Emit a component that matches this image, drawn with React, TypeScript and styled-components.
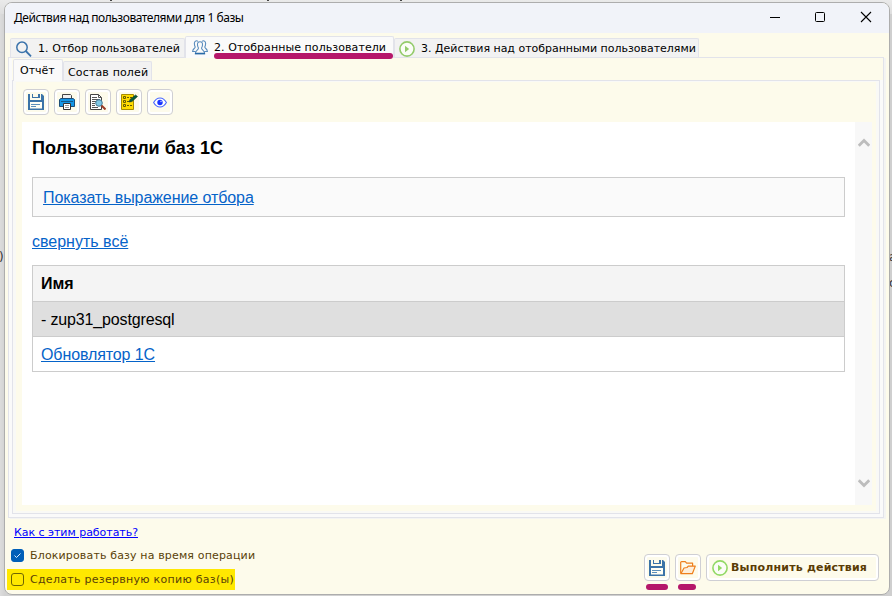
import React from "react";
import styled, { createGlobalStyle } from "styled-components";

const GlobalStyle = createGlobalStyle`
  * { box-sizing: border-box; }
  html, body { margin: 0; padding: 0; overflow: hidden; }
`;

const ui = `"DejaVu Sans", Verdana, sans-serif`;
const LINE = "#e2e3ea";
const CREAM = "#fdfbeb";

const Desktop = styled.div`
  position: relative;
  width: 892px;
  height: 596px;
  padding: 2px 2px 1px 4px;
  overflow: hidden;
  background: linear-gradient(90deg, #dcdcdc 0, #d2d2d2 5px, #d0d0d0 50%, #cfcfcf 100%);
  &::before {
    content: "";
    position: absolute;
    inset: 0 0 auto 0;
    height: 14px;
    background: linear-gradient(#eaeaea, #dedede);
  }
`;

const Stray = styled.span<{ $x: number; $y: number }>`
  position: absolute;
  left: ${(p) => p.$x}px;
  top: ${(p) => p.$y}px;
  font: 12px/14px ${ui};
  color: #333;
`;

const Tick = styled.i<{ $x: number }>`
  position: absolute;
  left: ${(p) => p.$x}px;
  top: 0;
  width: 2px;
  height: 1px;
  background: #444;
`;

const Window = styled.main`
  position: relative;
  display: flex;
  flex-direction: column;
  width: 886px;
  height: 593px;
  border: 1px solid #adadad;
  border-radius: 8px;
  overflow: hidden;
  background: ${CREAM};
`;

const TitleBar = styled.header`
  display: flex;
  align-items: center;
  justify-content: space-between;
  flex: none;
  height: 30px;
  padding-left: 9px;
  background: #f1f3f9;
`;

const Title = styled.h1`
  margin: 0;
  font: 400 12px/16px "Noto Sans", "Open Sans", sans-serif;
  letter-spacing: -0.45px;
  color: #000;
`;

const Controls = styled.div`
  display: flex;
  svg { display: block; }
`;

const TabStrip = styled.nav<{ $inner?: boolean }>`
  display: flex;
  align-items: flex-end;
  flex: none;
  height: ${(p) => (p.$inner ? 22 : 24)}px;
  padding-left: ${(p) => (p.$inner ? 4 : 5)}px;
  background: ${(p) => (p.$inner ? `linear-gradient(90deg, #fafafa 3px, ${CREAM} 3px)` : CREAM)};
`;

const Tab = styled.div<{ $w: number; $active?: boolean; $spacing?: number; $gap?: number }>`
  position: relative;
  z-index: ${(p) => (p.$active ? 1 : 0)};
  display: flex;
  align-items: center;
  flex: none;
  width: ${(p) => p.$w}px;
  height: ${(p) => (p.$active ? 22 : 19)}px;
  margin-bottom: ${(p) => (p.$active ? -1 : 0)}px;
  padding: ${(p) => (p.$active ? "0 0 0 6px" : "2px 0 0 4px")};
  gap: ${(p) => p.$gap ?? 5}px;
  border: 1px solid ${LINE};
  border-bottom: 0;
  border-radius: 2px 2px 0 0;
  background: ${(p) => (p.$active ? "#fafafa" : "#f2f2f2")};
  font: 11px/14px ${ui};
  letter-spacing: ${(p) => p.$spacing ?? 0}px;
  white-space: nowrap;
  color: #000;
  svg { flex: none; margin-top: -1px; }
`;

const TabLabel = styled.span<{ $drop?: boolean }>`
  padding-top: ${(p) => (p.$drop ? 2 : 0)}px;
`;

const OuterPanel = styled.section`
  display: flex;
  flex-direction: column;
  flex: none;
  width: 876px;
  height: 461px;
  margin-left: 3px;
  border: 1px solid ${LINE};
  background: #fafafa;
  box-shadow: 2px 1px 0 #f4f4f2;
`;

const InnerPanel = styled.section`
  width: 868px;
  height: 434px;
  margin-left: 3px;
  padding: 1px 3px 2px;
  border: 1px solid ${LINE};
  background: #f9f9f6;
`;

const ReportPane = styled.div`
  height: 429px;
  padding: 7px 4px 6px 6px;
  background: ${CREAM};
`;

const ToolBar = styled.div`
  display: flex;
  gap: 5px;
  height: 33px;
  padding-left: 1px;
`;

const Button = styled.button<{ $w?: number; $h?: number }>`
  display: flex;
  align-items: center;
  justify-content: ${(p) => (p.$w ? "flex-start" : "center")};
  flex: none;
  gap: 3px;
  width: ${(p) => p.$w ?? 26}px;
  height: ${(p) => p.$h ?? 26}px;
  padding: 0 0 0 ${(p) => (p.$w ? 5 : 0)}px;
  border: 1px solid #cfcfd4;
  border-radius: 4px;
  background: ${CREAM};
  box-shadow: inset 0 0 0 2px #fff;
  font: 700 11px/14px ${ui};
  letter-spacing: 0.19px;
  white-space: nowrap;
  color: #5a3c05;
  svg { flex: none; }
`;

const ButtonLabel = styled.span`
  padding-top: 1px;
`;

const Viewer = styled.div`
  display: flex;
  height: 383px;
`;

const Report = styled.article`
  flex: none;
  width: 833px;
  padding: 0 10px;
  background: #fff;
  font: 16px/20px "Liberation Sans", Arial, sans-serif;
  color: #000;
`;

const ReportTitle = styled.h2`
  margin: 0;
  padding-top: 15px;
  height: 55px;
  font-size: 18px;
  line-height: 22px;
`;

const Link = styled.a<{ $spacing?: number }>`
  color: #0563c9;
  text-decoration: underline;
  letter-spacing: ${(p) => p.$spacing ?? 0}px;
`;

const FilterBox = styled.div`
  display: flex;
  align-items: center;
  height: 40px;
  padding: 1px 10px 0;
  border: 1px solid #ccc;
  background: #fafafa;
`;

const Collapse = styled.div`
  height: 48px;
  padding-top: 15px;
`;

const Table = styled.div`
  border: 1px solid #ccc;
  border-top: 0;
`;

const Row = styled.div<{ $h: number; $bg: string; $bold?: boolean; $spacing?: number }>`
  display: flex;
  align-items: center;
  height: ${(p) => p.$h}px;
  padding: ${(p) => (p.$bold ? 0 : 1)}px 0 0 8px;
  border-top: 1px solid #ccc;
  background: ${(p) => p.$bg};
  font-weight: ${(p) => (p.$bold ? 700 : 400)};
  letter-spacing: ${(p) => p.$spacing ?? 0}px;
`;

const ScrollBar = styled.div`
  display: flex;
  flex-direction: column;
  justify-content: space-between;
  align-items: center;
  flex: none;
  width: 17px;
  padding: 16px 0 17px;
  background: #f8f8f8;
  svg { display: block; }
`;

const Footer = styled.footer`
  display: flex;
  justify-content: space-between;
  flex: 1;
  padding: 8px 10px 0 2px;
`;

const Options = styled.div`
  display: flex;
  flex-direction: column;
  align-items: flex-start;
`;

const HelpLink = styled.a`
  height: 20px;
  margin-left: 7px;
  font: 11px/14px ${ui};
  letter-spacing: -0.04px;
  text-decoration: underline;
  color: #0000ff;
`;

const Option = styled.label<{ $marked?: boolean; $spacing: number }>`
  display: flex;
  align-items: center;
  gap: 6px;
  width: ${(p) => (p.$marked ? "228px" : "auto")};
  height: ${(p) => (p.$marked ? 21 : 19)}px;
  margin-bottom: ${(p) => (p.$marked ? 0 : 4)}px;
  padding-left: 4px;
  background: ${(p) => (p.$marked ? "#ffe800" : "transparent")};
  font: 11px/14px ${ui};
  letter-spacing: ${(p) => p.$spacing}px;
  white-space: nowrap;
  color: #5a4208;
`;

const Box = styled.span<{ $on?: boolean }>`
  display: flex;
  width: 13px;
  height: 13px;
  margin-top: ${(p) => (p.$on ? 0 : -1)}px;
  border: 1px solid ${(p) => (p.$on ? "#005fb8" : "#6f6600")};
  border-radius: 3px;
  background: ${(p) => (p.$on ? "#005fb8" : "transparent")};
`;

const Actions = styled.div`
  display: flex;
  gap: 5px;
  padding-top: 28px;
`;

const Marked = styled.div`
  position: relative;
`;

const Stroke = styled.i<{ $x: number; $y: number; $w: number }>`
  position: absolute;
  left: ${(p) => p.$x}px;
  top: ${(p) => p.$y}px;
  width: ${(p) => p.$w}px;
  height: 6px;
  border-radius: 3px;
  background: #b5176a;
`;

const SearchIcon = () => (
  <svg width="17" height="16" viewBox="0 0 17 16" fill="none" stroke="#3b73ab">
    <circle cx="7" cy="6.300" r="5.200" strokeWidth="1.500" />
    <path d="M10.800 10 16 15.300" strokeWidth="1.800" />
  </svg>
);

const UsersIcon = () => (
  <svg width="16" height="15" viewBox="0 0 16 15" fill="none" stroke="#5a8cbd" strokeWidth="1.100">
    <path d="M6 1.500C4.800.2 2.600.8 2.400 3c-.1 2 .3 3 .8 4C3 8.700.8 8.400.6 11.500h3.200" />
    <path d="M10 1.500C11.200.2 13.400.8 13.600 3c.1 2-.3 3-.8 4 .2 1.700 2.400 1.400 2.600 4.500h-3.200" />
    <path d="M8 1.700C5.900 1.700 5.300 3.200 5.500 5c.1 1.500.6 2.500 1 3-.1 2.400-3 2-3.200 5.700h9.400C12.500 10 9.600 10.400 9.500 8c.4-.5.9-1.500 1-3 .2-1.800-.4-3.300-2.500-3.300Z" fill="#fafafa" />
    <path d="M3 13.500h10" stroke="#286aa8" strokeWidth="1.300" />
  </svg>
);

const PlayIcon = ({ color }: { color: string }) => (
  <svg width="16" height="16" viewBox="0 0 16 16">
    <circle cx="8" cy="8" r="7.100" fill="#fbfdf7" stroke={color} strokeWidth="1.600" />
    <path d="M6 4.800v6.400L10.200 8Z" fill={color} />
  </svg>
);

const SaveIcon = () => (
  <svg width="16" height="16" viewBox="0 0 16 16">
    <path d="M0 0h2v6h11V0h1l2 2v14H0Z" fill="#3b73a8" />
    <path d="M4 0h1v4H4zM10 0h2v4h-2zM4 3h8v1H4z" fill="#3b73a8" />
    <path d="M2 8h12v6.500H2z" fill="#fffef4" />
    <path d="M3 10.500h9M3 12.500h5" stroke="#5d8fba" />
  </svg>
);

const PrintIcon = () => (
  <svg width="16" height="16" viewBox="0 0 16 16">
    <path d="M3.500.5h8l1 1V6h-9Z" fill="#f2f2f2" stroke="#444" />
    <path d="M.5 5.500 2 4.500h12l1.500 1v7h-15Z" fill="#1496e6" stroke="#1d4d78" />
    <path d="M2 7.500h12" stroke="#155887" />
    <path d="M4.500 9.500h7v6h-7Z" fill="#fff" stroke="#333" />
    <path d="M6 11.500h4M6 13.500h4" stroke="#999" />
  </svg>
);

const PreviewIcon = () => (
  <svg width="16" height="16" viewBox="0 0 16 16">
    <path d="M.5.5h8l3 3v12H.5Z" fill="#fff" stroke="#444" />
    <path d="M8.500.5v3h3M2 3.500h5M2 5.500h8M2 7.500h4M2 9.500h3M2 11.500h3M2 13.500h6" stroke="#555" fill="none" />
    <circle cx="9" cy="9" r="3.300" fill="#7fc8e6" stroke="#477b94" />
    <path d="m11.500 11.500 4 4" stroke="#9b3c24" strokeWidth="2" />
  </svg>
);

const ChecklistIcon = () => (
  <svg width="17" height="16" viewBox="0 0 17 16">
    <path d="M.5.5h12v15H.5Z" fill="#ffdc00" stroke="#a68c00" />
    <path d="M2.500 2.500h2v2h-2zM2.500 6.500h2v2h-2zM2.500 10.500h2v2h-2z" fill="none" stroke="#665a00" />
    <path d="M6 3.500h5M6 7.500h4M6 11.500h5" stroke="#665a00" strokeDasharray="2 1" />
    <path d="m8 8 1-2.500L14.500 1l2 1.500-5.500 5Z" fill="#075c3c" stroke="#17372b" strokeWidth=".6" />
  </svg>
);

const EyeIcon = () => (
  <svg width="14" height="11" viewBox="0 0 14 11">
    <path d="M.6 5.500C4-.5 10-.5 13.400 5.500 10 11.500 4 11.500.6 5.500Z" fill="#fff" stroke="#4866ff" strokeWidth="1.100" />
    <circle cx="7" cy="5.500" r="2.700" fill="#1833ff" />
    <circle cx="8" cy="4.500" r=".8" fill="#b8c2ff" />
  </svg>
);

const FolderIcon = () => (
  <svg width="16" height="14" viewBox="0 0 16 14" fill="none" stroke="#ee7f1c" strokeWidth="1.200" strokeLinejoin="round">
    <path d="M.7 12.500V1.300l.8-.7h3.800l1.300 1.600h6v3" />
    <path d="M.9 12.700 4 7l3-.5 1.300-1.400h7l-3 7.600Z" fill="#fdeedb" />
  </svg>
);

const Chevron = ({ down }: { down?: boolean }) => (
  <svg width="12" height="10" viewBox="0 0 12 10">
    <path d={down ? "M.8 2.200 6 7.400 11.200 2.200" : "M.8 7.800 6 2.600 11.200 7.800"} fill="none" stroke="#bdbdbd" strokeWidth="2.800" />
  </svg>
);

export default function App() {
  return (
    <Desktop>
      <GlobalStyle />
      <Tick $x={110} />
      <Tick $x={267} />
      <Tick $x={400} />
      <Stray $x={-1} $y={250}>)</Stray>
      <Stray $x={889} $y={250}>а</Stray>
      <Stray $x={889} $y={276}>с</Stray>
      <Window>
        <TitleBar>
          <Title>Действия над пользователями для 1 базы</Title>
          <Controls>
            <svg width="124" height="30" viewBox="0 0 124 30" fill="none" stroke="#000">
              <path d="M5 14.500h10" />
              <rect x="50.500" y="9.500" width="9" height="9" rx="1" />
              <path d="m96 9 10 10m0-10L96 19" strokeWidth="1.100" />
            </svg>
          </Controls>
        </TitleBar>
        <TabStrip>
          <Tab $w={175} $spacing={0.07} $gap={6}><SearchIcon /><TabLabel>1. Отбор пользователей</TabLabel></Tab>
          <Tab $w={209} $active $spacing={0.07} $gap={6}>
            <UsersIcon /><TabLabel>2. Отобранные пользователи</TabLabel>
            <Stroke $x={28} $y={16} $w={179} />
          </Tab>
          <Tab $w={305} $spacing={-0.02} $gap={6}>
            <PlayIcon color="#94cb6b" /><TabLabel>3. Действия над отобранными пользователями</TabLabel>
          </Tab>
        </TabStrip>
        <OuterPanel>
          <TabStrip $inner>
            <Tab $w={50} $active>Отчёт</Tab>
            <Tab $w={89} $spacing={0.15}><TabLabel $drop>Состав полей</TabLabel></Tab>
          </TabStrip>
          <InnerPanel>
            <ReportPane>
              <ToolBar>
                <Button><SaveIcon /></Button>
                <Button><PrintIcon /></Button>
                <Button><PreviewIcon /></Button>
                <Button><ChecklistIcon /></Button>
                <Button><EyeIcon /></Button>
              </ToolBar>
              <Viewer>
                <Report>
                  <ReportTitle>Пользователи баз 1С</ReportTitle>
                  <FilterBox><Link $spacing={-0.08}>Показать выражение отбора</Link></FilterBox>
                  <Collapse><Link>свернуть всё</Link></Collapse>
                  <Table>
                    <Row $h={36} $bg="#f4f4f4" $bold>Имя</Row>
                    <Row $h={35} $bg="#dfdfdf" $spacing={-0.15}>- zup31_postgresql</Row>
                    <Row $h={35} $bg="#fff"><Link $spacing={-0.1}>Обновлятор 1С</Link></Row>
                  </Table>
                </Report>
                <ScrollBar><Chevron /><Chevron down /></ScrollBar>
              </Viewer>
            </ReportPane>
          </InnerPanel>
        </OuterPanel>
        <Footer>
          <Options>
            <HelpLink>Как с этим работать?</HelpLink>
            <Option $spacing={0.15}>
              <Box $on>
                <svg width="11" height="11" viewBox="0 0 11 11" fill="none" stroke="#dcefff">
                  <path d="m2.500 5.500 2 2 4-4" />
                </svg>
              </Box>
              Блокировать базу на время операции
            </Option>
            <Option $marked $spacing={0.28}><Box />Сделать резервную копию баз(ы)</Option>
          </Options>
          <Actions>
            <Marked><Button $h={27}><SaveIcon /></Button><Stroke $x={2} $y={30} $w={22} /></Marked>
            <Marked><Button $h={27}><FolderIcon /></Button><Stroke $x={3} $y={30} $w={18} /></Marked>
            <Button $w={173} $h={27}><PlayIcon color="#92d965" /><ButtonLabel>Выполнить действия</ButtonLabel></Button>
          </Actions>
        </Footer>
      </Window>
    </Desktop>
  );
}
